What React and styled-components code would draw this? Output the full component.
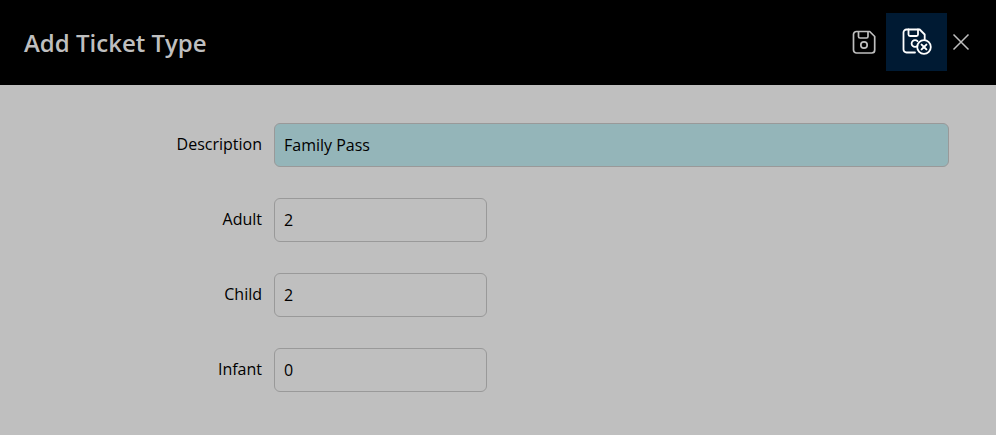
import React from "react"
import styled, { createGlobalStyle } from "styled-components"

const GlobalStyle = createGlobalStyle`
  html, body {
    margin: 0;
    height: 100%;
    background: #bfbfbf;
    font-family: "Open Sans", "Liberation Sans", sans-serif;
  }
`

const SaveIcon = () => (
  <svg width="26" height="26" viewBox="0 0 26 26" fill="none" stroke="currentColor" strokeWidth="1.7" strokeLinejoin="round">
    <path d="M5.5 2.5h13.2l5 5v13.5a3 3 0 0 1-3 3H5.500a3 3 0 0 1-3-3V5.500a3 3 0 0 1 3-3z" />
    <path d="M7.500 2.500v5a1.500 1.500 0 0 0 1.500 1.500h6.500a1.500 1.500 0 0 0 1.500-1.500v-5" />
    <circle cx="13" cy="16" r="3.200" />
  </svg>
)

const SaveCloseIcon = () => (
  <svg width="30" height="28" viewBox="0 0 30 28" fill="none" stroke="currentColor" strokeWidth="1.800" strokeLinejoin="round" strokeLinecap="round">
    <path d="M13 24.500H4.500a3 3 0 0 1-3-3V4.500a3 3 0 0 1 3-3h13.200l5 5v5" />
    <path d="M6.500 1.500v5a1.500 1.500 0 0 0 1.500 1.500h6.500a1.500 1.500 0 0 0 1.500-1.500v-5" />
    <path d="M15.500 13.200a3.400 3.400 0 1 0 0 4.600" />
    <circle cx="22" cy="19" r="6.800" />
    <path d="M19.600 16.600l4.800 4.800M24.400 16.600l-4.800 4.800" strokeWidth="2" />
  </svg>
)

const CloseIcon = () => (
  <svg width="18" height="18" viewBox="0 0 18 18" fill="none" stroke="currentColor" strokeWidth="1.500">
    <path d="M1.500 1.500l15 15M16.500 1.500l-15 15" />
  </svg>
)

const fields = [
  { label: "Description", value: "Family Pass", wide: true, active: true },
  { label: "Adult", value: "2" },
  { label: "Child", value: "2" },
  { label: "Infant", value: "0" },
]

export default function App() {
  return (
    <>
      <GlobalStyle />
      <Page>
        <Header>
          <Title>Add Ticket Type</Title>
          <Toolbar>
            <ToolButton>
              <SaveIcon />
            </ToolButton>
            <ToolButton $active>
              <SaveCloseIcon />
            </ToolButton>
            <ToolClose>
              <CloseIcon />
            </ToolClose>
          </Toolbar>
        </Header>
        <Form>
          {fields.map((f) => (
            <Row key={f.label}>
              <Label>{f.label}</Label>
              <Input $wide={f.wide} $active={f.active}>{f.value}</Input>
            </Row>
          ))}
        </Form>
      </Page>
    </>
  )
}

const Page = styled.div`
  width: 996px;
  height: 435px;
  overflow: hidden;
  background: #bfbfbf;
`

const Header = styled.header`
  height: 85px;
  background: #000;
  display: flex;
  align-items: center;
  justify-content: space-between;
  padding: 0 25px 0 24px;
`

const Title = styled.h1`
  margin: 0;
  font-size: 24px;
  font-weight: 600;
  line-height: 33px;
  color: #bfbfbf;
`

const Toolbar = styled.div`
  display: flex;
  align-items: center;
  margin-top: -1px;
`

const ToolButton = styled.div`
  width: ${(p) => (p.$active ? "61px" : "44px")};
  height: 58px;
  display: flex;
  align-items: center;
  justify-content: center;
  background: ${(p) => (p.$active ? "#001a33" : "transparent")};
  color: ${(p) => (p.$active ? "#fff" : "#bfbfbf")};
`

const ToolClose = styled(ToolButton)`
  width: 28px;
  margin-right: -4px;
`

const Form = styled.main`
  display: flex;
  flex-direction: column;
  gap: 31px;
  padding: 38px 47px 0 0;
`

const Row = styled.div`
  display: flex;
  align-items: center;
  gap: 12px;
`

const Label = styled.label`
  width: 262px;
  text-align: right;
  font-size: 16px;
  line-height: 22px;
  color: #000;
  margin-top: -2px;
`

const Input = styled.div`
  box-sizing: border-box;
  width: ${(p) => (p.$wide ? "675px" : "213px")};
  height: 44px;
  padding: 0 9px;
  display: flex;
  align-items: center;
  border: 1px solid #999;
  border-radius: 6px;
  background: ${(p) => (p.$active ? "#94b5b9" : "#bfbfbf")};
  font-size: 16px;
  color: #000;
`
